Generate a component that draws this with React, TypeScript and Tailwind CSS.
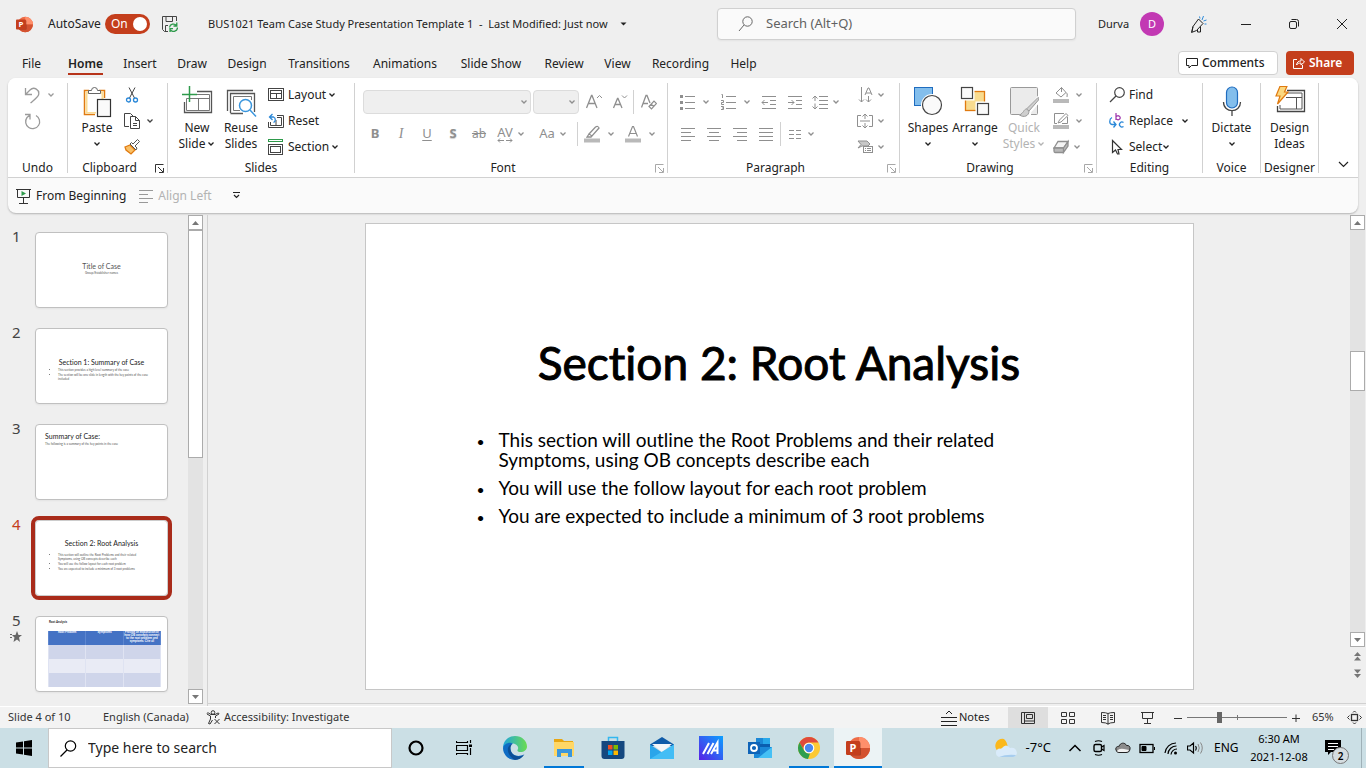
import React from 'react';

/* ---------- Shared pieces ---------- */

type SvgProps = { w?: number; h?: number; className?: string; children: React.ReactNode };

const Svg = ({ w = 16, h = 16, className = '', children }: SvgProps) => (
  <svg width={w} height={h} viewBox={`0 0 ${w} ${h}`} fill="none" stroke="currentColor" aria-hidden="true" className={`shrink-0 ${className}`}>
    {children}
  </svg>
);

const Chevron = ({ className = '' }: { className?: string }) => (
  <Svg w={8} h={6} className={className}>
    <path d="M1.5 1.5L4 4L6.5 1.5" strokeWidth="1.3" />
  </Svg>
);

const Launcher = ({ muted = false }: { muted?: boolean }) => (
  <button aria-label="Open dialog" className={`flex w-4 items-center justify-center ${muted ? 'text-[#a8a8a8]' : 'text-[#333]'}`}>
    <Svg w={9} h={9}>
      <path d="M8.5 .5H.5V8.5M3 3L8 8M8.5 4V8.5H4" />
    </Svg>
  </button>
);

const Lines = ({ rows }: { rows: [number, number][] }) => (
  <Svg>
    {rows.map(([x, end], i) => (
      <path key={i} d={`M${x} ${i * 4 + 2.5}H${end}`} />
    ))}
  </Svg>
);

type GroupProps = { label: string; width: string; launcher?: 'dark' | 'muted'; children: React.ReactNode };

const Group = ({ label, width, launcher, children }: GroupProps) => (
  <>
    <section aria-label={label} className={`flex shrink-0 flex-col pt-1 ${width}`}>
      <div className="flex h-[78px]">{children}</div>
      <div className="flex h-4">
        <span className="flex-1 text-center leading-4">{label}</span>
        {launcher && <Launcher muted={launcher === 'muted'} />}
      </div>
    </section>
    <div className="mt-[5px] h-[90px] w-px shrink-0 bg-[#d1d1d1]" />
  </>
);

type BigButtonProps = { icon: React.ReactNode; lines: string[]; arrow?: boolean; width: string; muted?: boolean };

const BigButton = ({ icon, lines, arrow, width, muted }: BigButtonProps) => (
  <button className={`flex shrink-0 flex-col items-center pt-0.5 ${width} ${muted ? 'text-[#b3b3b3]' : ''}`}>
    <span className="flex h-9 items-center justify-center">{icon}</span>
    {lines.map((line, i) => (
      <span key={line} className="flex h-4 items-center gap-0.5 leading-4">
        {line}
        {arrow && lines.length > 1 && i === lines.length - 1 && <Chevron />}
      </span>
    ))}
    {arrow && lines.length === 1 && (
      <span className="flex h-4 items-center">
        <Chevron />
      </span>
    )}
  </button>
);

const SmallButton = ({ icon, label, arrow, gap = 'ml-0.5' }: { icon: React.ReactNode; label?: string; arrow?: boolean; gap?: string }) => (
  <button className="flex h-[26px] items-center">
    {icon}
    {label && <span className="ml-1">{label}</span>}
    {arrow && <Chevron className={gap} />}
  </button>
);

const RowSeparator = ({ className = '' }: { className?: string }) => <div className={`h-6 w-px shrink-0 bg-[#d1d1d1] ${className}`} />;

const PowerPointLogo = ({ size }: { size: number }) => (
  <svg width={size} height={size} viewBox="0 0 24 24" aria-hidden="true" className="shrink-0">
    <circle cx="13" cy="12" r="11" fill="#ed6c47" />
    <path d="M13 1a11 11 0 0 1 11 11H13z" fill="#ff8f6b" />
    <path d="M2 12h22a11 11 0 0 1-22 0z" fill="#d35230" />
    <path d="M3 6h10.500a1.500 1.500 0 0 1 1.500 1.500v11a1 1 0 0 1-1 1H4z" fill="#000" opacity=".2" />
    <rect y="5" width="14" height="14" rx="1.200" fill="#c43e1c" />
    <text x="7" y="16" textAnchor="middle" fontFamily="Open Sans, sans-serif" fontWeight="700" fontSize="11" fill="#fff">P</text>
  </svg>
);

/* ---------- Title bar and tabs ---------- */

const TitleBar = () => (
  <header className="flex h-12 shrink-0 items-center">
    <div className="flex flex-1 items-center pl-4">
      <PowerPointLogo size={17} />
      <label htmlFor="autosave" className="ml-[15px] w-[57px]">AutoSave</label>
      <span className="relative flex h-5 w-[45px] items-center">
        <input id="autosave" type="checkbox" defaultChecked className="h-5 w-[45px] appearance-none rounded-full bg-[#c43e1c]" />
        <span className="pointer-events-none absolute left-1.5 text-white">On</span>
        <span className="pointer-events-none absolute right-[3px] size-3.5 rounded-full bg-white" />
      </span>
      <button aria-label="Save" className="ml-3 text-[#444]">
        <Svg>
          <path d="M6 15.500H2.500L.5 13.500V.5H14.500V5M4 .5V5.500H10.500V.5M3.500 15.500V9.500H6" />
          <path d="M7.500 11.500A4 4 0 0 1 14.500 9.500M14.800 6.500V10H11.500M15.500 11.500A4 4 0 0 1 8.500 14M8 16V12.700H11" stroke="#2e9a4b" strokeWidth="1.300" />
        </Svg>
      </button>
      <button className="ml-[30px] flex items-center whitespace-pre text-[11px]">
        BUS1021 Team Case Study Presentation Template 1  -  Last Modified: Just now
        <Svg w={7} h={5} className="ml-3">
          <path d="M.5 .5H6.500L3.500 3.500z" fill="currentColor" stroke="none" />
        </Svg>
      </button>
    </div>
    <div className="flex h-8 w-[359px] items-center rounded border border-[#d0d0d0] bg-[#fafafa] pl-5 text-[#666] shadow-xs">
      <Svg>
        <circle cx="9.500" cy="5.500" r="4.700" />
        <path d="M6 9L1 15" />
      </Svg>
      <input aria-label="Search" placeholder="Search (Alt+Q)" className="ml-3 flex-1 bg-transparent text-[13px] outline-none placeholder:text-[#616161]" />
    </div>
    <div className="flex w-[290px] items-center text-[#222]">
      <span className="ml-[22px] w-[42px] text-[11px]">Durva</span>
      <span className="flex size-6 items-center justify-center rounded-full bg-[#c239b3] text-[11px] text-white">D</span>
      <button aria-label="Drawing tools" className="ml-[26px]">
        <Svg w={17} h={17}>
          <path d="M8.500 3L13 7.500L6.500 14.500L1.500 16.500L3 10.500zM7.500 13.500V16H10.500V10.500M3 10.500L2 16" />
          <path d="M9.500 .5L10 2.500M13.500 0L12 4M16.500 4L13.500 5M16.500 8H14.500" stroke="#2b88d8" />
        </Svg>
      </button>
      <button aria-label="Minimize" className="ml-[33px]">
        <Svg w={12} h={12}><path d="M1 6.500H11" /></Svg>
      </button>
      <button aria-label="Restore" className="ml-9">
        <Svg w={12} h={12}>
          <rect x="1.500" y="3.500" width="7" height="7" rx="1.500" />
          <path d="M3.500 1.500H8.500A2 2 0 0 1 10.500 3.500V8.500" />
        </Svg>
      </button>
      <button aria-label="Close" className="ml-9">
        <Svg w={12} h={12}><path d="M1 1L11 11M11 1L1 11" /></Svg>
      </button>
    </div>
  </header>
);

const tabs = [
  { name: 'File', width: 'w-[39px]' },
  { name: 'Home', width: 'w-[69px]' },
  { name: 'Insert', width: 'w-10' },
  { name: 'Draw', width: 'w-16' },
  { name: 'Design', width: 'w-[46px]' },
  { name: 'Transitions', width: 'w-[98px]' },
  { name: 'Animations', width: 'w-[74px]' },
  { name: 'Slide Show', width: 'w-[98px]' },
  { name: 'Review', width: 'w-12' },
  { name: 'View', width: 'w-[59px]' },
  { name: 'Recording', width: 'w-[67px]' },
  { name: 'Help', width: 'w-[59px]' },
];

const TabRow = () => (
  <nav className="flex h-[30px] shrink-0 items-center pl-3 pr-3">
    {tabs.map((tab) => (
      <button key={tab.name} className={`flex h-[30px] shrink-0 justify-center leading-8 ${tab.width}`}>
        {tab.name === 'Home' ? <span className="h-[27px] border-b-2 border-[#b7341a] font-semibold">Home</span> : tab.name}
      </button>
    ))}
    <div className="flex-1" />
    <button className="flex h-6 w-[100px] items-center gap-1 rounded border border-[#d1d1d1] bg-white pl-[7px] font-medium">
      <Svg w={12} h={12}>
        <path d="M.5 1.500H11.500V8.500H5.500L3 11V8.500H.5z" />
      </Svg>
      Comments
    </button>
    <button className="ml-2 flex h-6 w-[68px] items-center gap-1 rounded bg-[#c43e1c] pl-[7px] font-semibold text-white">
      <Svg w={12} h={12}>
        <path d="M4 2.500H.5V11.500H9.500V8M3.500 8C4 5 5.500 4 8 4V1.500L11.500 5L8 8V6C6 6 4.500 6.500 3.500 8z" />
      </Svg>
      Share
    </button>
  </nav>
);

/* ---------- Ribbon ---------- */

const UndoGroup = () => (
  <Group label="Undo" width="w-[59px]">
    <div className="flex flex-col pl-4 text-[#9b9b9b]">
      <SmallButton
        arrow
        gap="ml-1.5"
        icon={<Svg w={17} h={17}><path d="M1.500 1V7.500H8M1.500 7.500L6 3C10 -1 16 3 14.500 8C14 10 10 13 6.500 16" strokeWidth="1.300" /></Svg>}
      />
      <SmallButton icon={<Svg w={17} h={17}><path d="M1 1.500H6V6.500M6 2L3 4.500A7 7 0 1 0 12 2.500" strokeWidth="1.300" /></Svg>} />
    </div>
  </Group>
);

const ClipboardGroup = () => (
  <Group label="Clipboard" width="w-[99px]" launcher="dark">
    <BigButton
      width="ml-1 w-[50px]"
      lines={['Paste']}
      arrow
      icon={
        <Svg w={30} h={32} className="text-[#333]">
          <path d="M13 28.500H2.500V4.500H7M17 4.500H22.500V12" stroke="#e07a10" strokeWidth="1.500" />
          <path d="M3.500 5.500H21.500V13H14V27.500H3.500z" fill="#fbdc94" stroke="none" />
          <path d="M5.500 7.500H19.500V24H14V26H5.500z" fill="#fff" stroke="none" />
          <path d="M6.500 7.500V4.500H9.500A3 3 0 0 1 15.500 4.500H18.500V7.500z" fill="#fff" stroke="#666" />
          <rect x="15.500" y="13.500" width="13" height="17" fill="#fafafa" strokeWidth="1.200" />
        </Svg>
      }
    />
    <div className="ml-0.5 flex flex-col text-[#444]">
      <SmallButton
        icon={
          <Svg>
            <path d="M5 .5L10.500 11M11 .5L5.500 11" />
            <circle cx="4.500" cy="13" r="2" stroke="#2b88d8" strokeWidth="1.300" />
            <circle cx="11.500" cy="13" r="2" stroke="#2b88d8" strokeWidth="1.300" />
          </Svg>
        }
      />
      <SmallButton
        arrow
        gap="ml-1.5"
        icon={
          <Svg>
            <path d="M5 13.500H.5V.5H6.500L9 3M6.500 3.500H11.500L15.500 7.500V15.500H6.500zM11.500 3.500V7.500H15.500M9 10.500H13M9 12.500H13" />
          </Svg>
        }
      />
      <SmallButton
        icon={
          <Svg>
            <path d="M1 8L6 6L11 11L7 15L2 11z" fill="#f9c067" stroke="#e07a10" strokeWidth="1.300" />
            <path d="M6 5L12 11L13 9L11 7L15.500 2.500L13.500 .5L9 5L7.500 3.500z" fill="#fff" stroke="#555" />
          </Svg>
        }
      />
    </div>
  </Group>
);

const SlidesGroup = () => (
  <Group label="Slides" width="w-[186px]">
    <BigButton
      width="ml-[7px] w-11"
      lines={['New', 'Slide']}
      arrow
      icon={
        <Svg w={32} h={32} className="text-[#555]">
          <path d="M16 5.500H30.500V26.500H3.500V16" strokeWidth="1.300" />
          <path d="M16 8.500H28.500V24.500H5.500V12.500H28.500M17.500 12.500V24.500" stroke="#777" />
          <path d="M8.500 0V16M1 8.500H16" stroke="#2e9a4b" strokeWidth="1.500" />
        </Svg>
      }
    />
    <BigButton
      width="w-11"
      lines={['Reuse', 'Slides']}
      icon={
        <Svg w={32} h={32} className="text-[#555]">
          <path d="M2.500 25V4.500H28M5.500 27V7.500H29.500V26M5.500 27.500H18" strokeWidth="1.300" />
          <path d="M8.500 24.500V10.500H26.500V14M8.500 24.500H15" stroke="#777" />
          <circle cx="20.500" cy="19.500" r="6" fill="#fff" stroke="#3a96dd" strokeWidth="1.500" />
          <path d="M25 24L31 30.500" stroke="#3a96dd" strokeWidth="1.500" />
        </Svg>
      }
    />
    <div className="ml-[5px] flex flex-col">
      <SmallButton
        label="Layout"
        arrow
        icon={
          <Svg className="text-[#444]">
            <rect x=".5" y="1.500" width="15" height="12" />
            <rect x="2.500" y="3.500" width="11" height="8" />
            <path d="M2.500 6.500H13.500M8.500 6.500V11.500" />
          </Svg>
        }
      />
      <SmallButton
        label="Reset"
        icon={
          <Svg className="text-[#444]">
            <path d="M9 2.500H15.500V14.500H.5V9M2.500 9V12.500H13.500V4.500H9M8 7V12" />
            <path d="M4.500 1L1.500 4L4.500 7M1.500 4H5.500A3 3 0 0 1 5.500 9.500" stroke="#2b88d8" strokeWidth="1.300" />
          </Svg>
        }
      />
      <SmallButton
        label="Section"
        arrow
        icon={
          <Svg className="text-[#444]">
            <rect x=".5" y=".5" width="14" height="2" stroke="#2e9a4b" />
            <rect x=".5" y="5.500" width="14" height="10" />
            <rect x="2.500" y="7.500" width="10" height="6" />
          </Svg>
        }
      />
    </div>
  </Group>
);

const cell = 'flex h-6 shrink-0 items-center justify-center';

const FontGroup = () => (
  <Group label="Font" width="w-[312px]" launcher="muted">
    <div className="flex flex-col gap-2 pt-2 pl-2 text-[#8f8f8f]">
      <div className="flex h-6 items-center">
        <button aria-label="Font family" className="flex h-6 w-[168px] items-center justify-end rounded border border-[#dcdcdc] bg-[#efefef] pr-0.5"><Chevron /></button>
        <button aria-label="Font size" className="ml-0.5 flex h-6 w-[46px] items-center justify-end rounded border border-[#dcdcdc] bg-[#efefef] pr-0.5"><Chevron /></button>
        <button aria-label="Increase font size" className={`${cell} ml-0.5 w-[26px]`}>
          <Svg><path d="M.5 14L5.500 1.500H6L11 14M2.500 9.500H9" strokeWidth="1.300" /><path d="M11 4L13.500 1.500L16 4" /></Svg>
        </button>
        <button aria-label="Decrease font size" className={`${cell} w-[26px]`}>
          <Svg><path d="M1.500 14L5.500 4.500H6L10 14M3 10.500H8.500" strokeWidth="1.300" /><path d="M10 1.500L12.500 4L15 1.500" /></Svg>
        </button>
        <RowSeparator />
        <button aria-label="Clear formatting" className={`${cell} ml-0.5 w-[26px]`}>
          <Svg><path d="M.5 13.500L5 1.500H6L9 9M2 9.500H7" strokeWidth="1.300" /><path d="M8 12.500L13 7L15.500 9.500L10.500 15zM10 10L12.800 12.500" strokeWidth="1.200" /></Svg>
        </button>
      </div>
      <div className="-ml-px flex h-6 items-center">
        <button className={`${cell} w-[26px] text-[13px] font-bold`}>B</button>
        <button className={`${cell} w-[26px] font-['Liberation_Serif',serif] text-sm italic`}>I</button>
        <button className={`${cell} w-[26px] text-[13px] underline underline-offset-2`}>U</button>
        <button className={`${cell} w-[26px] text-[13px] font-bold text-shadow-xs`}>S</button>
        <button className={`${cell} w-[26px] line-through`}>ab</button>
        <button aria-label="Character spacing" className={`${cell} ml-px w-9 gap-1`}>
          <span className="flex flex-col items-center">
            <span className="text-[13px] leading-3">AV</span>
            <Svg w={16} h={5}><path d="M7 2.500H1M3 .5L1 2.500L3 4.500M9 2.500H15M13 .5L15 2.500L13 4.500" /></Svg>
          </span>
          <Chevron />
        </button>
        <button aria-label="Change case" className={`${cell} ml-1.5 w-9 gap-1 text-[13px]`}>Aa<Chevron /></button>
        <RowSeparator className="ml-1.5" />
        <button aria-label="Highlight color" className={`${cell} ml-1.5 gap-[7px]`}>
          <Svg w={16} h={18}>
            <path d="M5 9L11.500 2Q14 .5 15 3L8 11zM5 9L3 12H7L8 11" strokeWidth="1.300" />
            <path d="M0 15.500H16" stroke="#b9b9b9" strokeWidth="4" />
          </Svg>
          <Chevron />
        </button>
        <button aria-label="Font color" className={`${cell} ml-2.5 gap-[7px]`}>
          <Svg w={16} h={18}>
            <path d="M3.500 11.500L7.500 1.500H8.500L12.500 11.500M5 8.500H11" strokeWidth="1.200" />
            <path d="M0 15.500H16" stroke="#b9b9b9" strokeWidth="4" />
          </Svg>
          <Chevron />
        </button>
      </div>
    </div>
  </Group>
);

const ParagraphGroup = () => (
  <Group label="Paragraph" width="w-[231px]" launcher="muted">
    <div className="flex w-[185px] flex-col gap-2 pt-2 pl-3 text-[#8f8f8f]">
      <div className="flex h-6 items-center">
        <button aria-label="Bullets" className="flex items-center gap-1.5">
          <Svg>
            <path d="M5 2.500H15M5 8.500H15M5 14.500H15" />
            <path d="M0 2.500H3M0 8.500H3M0 14.500H3" strokeWidth="3" />
          </Svg>
          <Chevron />
        </button>
        <button aria-label="Numbering" className="ml-[11px] flex items-center gap-1.5">
          <Svg>
            <path d="M5 2.500H15M5 8.500H15M5 14.500H15M.5 .5H1.500V4M0 6.500H2.500V8.500H.5V10.500H3M0 12.500H2.500V15.500H0M1 14H2" />
          </Svg>
          <Chevron />
        </button>
        <button aria-label="Decrease indent" className="ml-2.5">
          <Svg><path d="M1 2.500H15M9 6.500H15M9 10.500H15M1 14.500H15M7 8.500H1M3.500 6L1 8.500L3.500 11" /></Svg>
        </button>
        <button aria-label="Increase indent" className="ml-2.5">
          <Svg><path d="M1 2.500H15M9 6.500H15M9 10.500H15M1 14.500H15M1 8.500H7M4.500 6L7 8.500L4.500 11" /></Svg>
        </button>
        <button aria-label="Line spacing" className="ml-[9px] flex items-center gap-1">
          <Svg><path d="M7 2.500H16M7 6.500H16M7 10.500H16M7 14.500H16M3 2V7M.5 4.500L3 2L5.500 4.500M3 9.500V15M.5 12.500L3 15L5.500 12.500" /></Svg>
          <Chevron />
        </button>
      </div>
      <div className="flex h-6 items-center gap-2.5">
        <button aria-label="Align left"><Lines rows={[[1, 15], [1, 11], [1, 15], [1, 11]]} /></button>
        <button aria-label="Center"><Lines rows={[[1, 15], [3, 13], [1, 15], [3, 13]]} /></button>
        <button aria-label="Align right"><Lines rows={[[1, 15], [5, 15], [1, 15], [5, 15]]} /></button>
        <button aria-label="Justify"><Lines rows={[[1, 15], [1, 15], [1, 15], [1, 15]]} /></button>
        <RowSeparator className="-mx-1" />
        <button aria-label="Columns" className="flex items-center gap-0.5 pl-0.5">
          <Svg><path d="M0 4.500H5M7 4.500H12M0 8.500H5M7 8.500H12M0 12.500H5M7 12.500H12" /></Svg>
          <Chevron />
        </button>
      </div>
    </div>
    <div className="flex flex-col pl-1 text-[#8f8f8f]">
      <SmallButton
        arrow
        gap="ml-1"
        icon={<Svg><path d="M4.500 0V15M2 12.500L4.500 15L7 12.500M8 8L11 1H12L15 8M9 6H14M11.500 9V15M9 12.500L11.500 15L14 12.500" /></Svg>}
      />
      <SmallButton
        arrow
        gap="ml-1"
        icon={<Svg><path d="M4 2.500H.5V13.500H4M12 2.500H15.500V13.500H12M3 8H13M8 1V6M5.500 3.500L8 1L10.500 3.500M8 10V15M5.500 12.500L8 15L10.500 12.500" /></Svg>}
      />
      <SmallButton
        arrow
        gap="ml-1"
        icon={
          <Svg>
            <path d="M1 2H10L13 5L11 7H5L1 9L4 5.500z" fill="#c8c8c8" />
            <rect x="6.500" y="7.500" width="9" height="6" fill="#fff" />
            <path d="M8 9.500H9M10 9.500H14M8 11.500H9M10 11.500H14" />
          </Svg>
        }
      />
    </div>
  </Group>
);

const DrawingGroup = () => (
  <Group label="Drawing" width="w-[196px]" launcher="muted">
    <BigButton
      width="ml-1 w-12"
      lines={['Shapes']}
      arrow
      icon={
        <Svg w={30} h={32}>
          <rect x="1.500" y="1.500" width="18" height="18" fill="#83beec" stroke="#1f6cbf" />
          <circle cx="19" cy="19" r="9.500" fill="#fafafa" stroke="#fff" strokeWidth="3" />
          <circle cx="19" cy="19" r="9.500" fill="#fafafa" stroke="#444" strokeWidth="1.200" />
        </Svg>
      }
    />
    <BigButton
      width="w-[46px]"
      lines={['Arrange']}
      arrow
      icon={
        <Svg w={30} h={32}>
          <rect x="5.500" y="5.500" width="19" height="19" fill="#f8db8f" stroke="#e07a10" strokeWidth="1.300" />
          <path d="M0 0H14.500V14.500H0zM15.500 15.500H30V30H15.500z" fill="#fff" stroke="none" />
          <rect x="1.500" y="1.500" width="11" height="11" fill="#fafafa" stroke="#444" strokeWidth="1.200" />
          <rect x="17.500" y="17.500" width="11" height="11" fill="#fafafa" stroke="#444" strokeWidth="1.200" />
        </Svg>
      }
    />
    <BigButton
      width="ml-0.5 w-12"
      lines={['Quick', 'Styles']}
      arrow
      muted
      icon={
        <Svg w={30} h={32} className="text-[#999]">
          <rect x="1.500" y="1.500" width="27" height="27" rx="1" fill="#ebebeb" />
          <path d="M29 12L19 24C17 23 15 25 14 28L10 31H18C21 30 21 28 20.500 26L30 15z" fill="#dadada" stroke="#fff" strokeWidth="3" />
          <path d="M29 11.500Q31 12 29.500 14L20 25L17.500 23zM17.500 23C14.500 23 15 27 10.500 29C15 32 20 30 20 25" fill="#cfcfcf" />
        </Svg>
      }
    />
    <div className="ml-[5px] flex flex-col text-[#8f8f8f]">
      <SmallButton
        arrow
        gap="ml-1.5"
        icon={
          <Svg w={16} h={18}>
            <path d="M3 7L8.500 1.500L13 6.500L8 11zM8.500 1.500V6M13 6.500Q15 7 14 11" />
            <path d="M0 15H16" stroke="#b9b9b9" strokeWidth="4" />
          </Svg>
        }
      />
      <SmallButton
        arrow
        gap="ml-1.5"
        icon={
          <Svg w={16} h={18}>
            <path d="M11 1.500H1.500V11.500H4M14.500 5V11.500H9M5 11L6.500 8L13 1.500L15 3.500L8 10z" />
            <path d="M0 15H16" stroke="#b9b9b9" strokeWidth="4" />
          </Svg>
        }
      />
      <SmallButton
        arrow
        gap="ml-1"
        icon={
          <Svg>
            <path d="M1 9L5 2.500H15L10.500 9z" fill="#f4f4f4" strokeWidth="1.300" />
            <path d="M1 9H10.500V13.500H2Q1 13.500 1 12zM10.500 9L15 2.500V7L10.500 13.500z" fill="#b9b9b9" strokeWidth="1.300" />
          </Svg>
        }
      />
    </div>
  </Group>
);

const EditingGroup = () => (
  <Group label="Editing" width="w-[105px]">
    <div className="flex flex-col pl-3">
      <SmallButton
        label="Find"
        icon={<Svg className="text-[#444]"><circle cx="10.500" cy="5.500" r="4.800" strokeWidth="1.200" /><path d="M7 9L1 15" strokeWidth="1.200" /></Svg>}
      />
      <SmallButton
        label="Replace"
        arrow
        gap="ml-2"
        icon={
          <Svg>
            <path d="M7 0V7M7 4A2.200 2 0 1 1 7 5.500" stroke="#a33fb0" strokeWidth="1.300" />
            <path d="M14.500 9.500A2.500 2.500 0 1 0 14.500 13.500" stroke="#2b88d8" strokeWidth="1.300" />
            <path d="M3 4.500C0 6 0 11 3 11.500H7M4.500 8.500L7 11.500L4.500 14.500" stroke="#2b88d8" strokeWidth="1.300" />
          </Svg>
        }
      />
      <SmallButton
        label="Select"
        arrow
        gap="ml-0"
        icon={<Svg className="text-[#333]"><path d="M3.500 1.500V13.500L6.500 11L8.500 15H10L9 10.500H12.500z" strokeWidth="1.200" /></Svg>}
      />
    </div>
  </Group>
);

const Ribbon = () => (
  <div className="mx-2 mb-0.5 flex shrink-0 flex-col rounded-lg bg-[#fafafa] shadow-[0_1px_2px_rgba(0,0,0,0.25)]">
    <div className="flex h-[100px] overflow-hidden rounded-t-lg border-b border-[#d1d1d1] bg-white">
      <UndoGroup />
      <ClipboardGroup />
      <SlidesGroup />
      <FontGroup />
      <ParagraphGroup />
      <DrawingGroup />
      <EditingGroup />
      <Group label="Voice" width="w-[57px]">
        <BigButton
          width="w-[57px]"
          lines={['Dictate']}
          arrow
          icon={
            <Svg w={20} h={32} className="text-[#444]">
              <rect x="4.500" y="1" width="11" height="21" rx="5.500" fill="#83beec" stroke="#1f6cbf" strokeWidth="1.200" />
              <path d="M1.500 16C1.500 27.500 18.500 27.500 18.500 16M10 25V30" strokeWidth="1.300" />
            </Svg>
          }
        />
      </Group>
      <Group label="Designer" width="w-[57px]">
        <BigButton
          width="w-[57px]"
          lines={['Design', 'Ideas']}
          icon={
            <Svg w={32} h={32} className="text-[#444]">
              <path d="M13 4.500H30.500V25.500H3.500V20" strokeWidth="1.300" />
              <path d="M13 7H28V23H6V19M12 11.500H28M22.500 11.500V23" stroke="#555" />
              <path d="M6 .3H13L10.500 6H14L3.500 18L6 10H2z" fill="#fbd87f" stroke="#e07a10" strokeWidth="1.200" />
            </Svg>
          }
        />
      </Group>
      <div className="flex flex-1 items-end justify-end pr-[9px] pb-[9px]">
        <button aria-label="Collapse ribbon">
          <Svg w={11} h={7}><path d="M1 1L5.500 5.500L10 1" strokeWidth="1.200" /></Svg>
        </button>
      </div>
    </div>
    <div className="flex h-[35px] items-center pl-2">
      <button className="flex items-center gap-1">
        <Svg className="text-[#333]">
          <path d="M0 1.500H15M1.500 1.500V9.500H13.500V1.500M7.500 9.500V15.500M3 15.500H12" />
          <path d="M5.500 3L10 5.500L5.500 8z" fill="#2e9a4b" stroke="none" />
        </Svg>
        From Beginning
      </button>
      <button className="ml-3 flex items-center gap-1 text-[#b3b3b3]">
        <Svg><path d="M1 2.500H15M1 6.500H10M1 10.500H15M1 14.500H10" stroke="#999" /></Svg>
        Align Left
      </button>
      <button aria-label="Customize toolbar" className="ml-5">
        <Svg w={9} h={7}><path d="M1 .5H8M2 3L4.500 5.500L7 3" strokeWidth="1.200" /></Svg>
      </button>
    </div>
  </div>
);

/* ---------- Slides ---------- */

const ScrollArrow = ({ down = false }: { down?: boolean }) => (
  <button aria-label={down ? 'Scroll down' : 'Scroll up'} className="flex h-[15px] w-[15px] shrink-0 items-center justify-center border border-[#ababab] bg-white text-[#777]">
    <Svg w={7} h={4}>
      <path d={down ? 'M0 0H7L3.500 4z' : 'M0 4H7L3.500 0z'} fill="currentColor" stroke="none" />
    </Svg>
  </button>
);

const slideBullets = [
  'This section will outline the Root Problems and their related Symptoms, using OB concepts describe each',
  'You will use the follow layout for each root problem',
  'You are expected to include a minimum of 3 root problems',
];

const Bullets = ({ items }: { items: string[] }) => (
  <ul className="flex list-disc flex-col gap-px pl-[22px] pr-4 text-[3px] leading-[4px] text-[#555]">
    {items.map((item) => <li key={item}>{item}</li>)}
  </ul>
);

const thumbnails = [
  <div className="pt-[28px] text-center">
    <p className="text-[7px] leading-[10px] text-[#555]">Title of Case</p>
    <p className="text-[3px] leading-[5px] text-[#555]">Group/Establisher names</p>
  </div>,
  <div className="pt-[29px]">
    <p className="mb-px text-center text-[7px] leading-[9px]">Section 1: Summary of Case</p>
    <Bullets items={['This section provides a high level summary of the case', 'The section will be one slide in length with the key points of the case included']} />
  </div>,
  <div className="pt-[7px] pl-[9px]">
    <p className="text-[7px] leading-[9px]">Summary of Case:</p>
    <p className="text-[3px] leading-[7px] text-[#555]">The following is a summary of the key points in the case</p>
  </div>,
  <div className="pt-[18px]">
    <p className="mb-[5px] text-center text-[7px] leading-[9px]">Section 2: Root Analysis</p>
    <Bullets items={slideBullets} />
  </div>,
  <div className="pt-px pl-3">
    <p className="pb-[5px] pl-px text-[3px] leading-[8px] font-bold">Root Analysis</p>
    <table className="w-[113px] table-fixed border-collapse text-center text-[3px] leading-[3px] text-white">
      <thead>
        <tr className="h-[14px] bg-[#4472c4] align-top">
          <th className="border-x border-[#5d86cf]">Root Problem</th>
          <th className="border-x border-[#5d86cf]">Symptoms</th>
          <th className="border-x border-[#5d86cf]">Provide an explanation of how OB concepts connect to the root problem and symptoms. Cite all</th>
        </tr>
      </thead>
      <tbody>
        {['bg-[#cfd5ea]', 'bg-[#e9ebf5]', 'bg-[#cfd5ea]'].map((shade, i) => (
          <tr key={i} className={`h-[14px] ${shade}`}><td className="border-x border-[#dfe3f2]" /><td /><td className="border-x border-[#dfe3f2]" /></tr>
        ))}
      </tbody>
    </table>
  </div>,
];

const SlidePanel = () => (
  <aside className="flex w-[208px] shrink-0 border-r border-[#d1d1d1]">
    <ol className="flex w-[188px] flex-col gap-5 overflow-hidden pt-[17px]">
      {thumbnails.map((content, i) => (
        <li key={i} className="flex h-[76px] shrink-0">
          <div className={`flex w-[35px] flex-col pl-3 text-[15px] leading-2 ${i === 3 ? 'text-[#c43e1c]' : 'text-[#444]'}`}>
            {i + 1}
            {i === 4 && (
              <Svg w={12} h={11} className="mt-[7px] -ml-0.5">
                <path d="M7 0L8.500 4H12L9 6.500L10 11L7 8.500L3.500 11L4.500 6.500L2 4H5.500z" fill="#666" stroke="none" />
                <path d="M0 3.500H2M0 6.500H2" stroke="#666" />
              </Svg>
            )}
          </div>
          <button
            aria-label={`Slide ${i + 1}`}
            className={`flex h-[76px] w-[133px] flex-col overflow-hidden rounded-[4px] border bg-white text-left font-['Lato',sans-serif] text-[#222] [font-variant-ligatures:none] ${i === 3 ? 'border-[#ccc] outline-4 outline-[#a92b1a]' : 'border-[#c0c0c0] shadow-xs'}`}
          >
            <div className="w-full">{content}</div>
          </button>
        </li>
      ))}
    </ol>
    <div className="mb-0.5 flex w-[15px] flex-col bg-[#e3e3e3]">
      <ScrollArrow />
      <div className="h-[228px] border border-[#ababab] bg-white" />
      <div className="flex-1" />
      <ScrollArrow down />
    </div>
  </aside>
);

const SlideEditor = () => (
  <main className="mb-0.5 flex min-w-0 flex-1">
    <div className="flex min-w-0 flex-1 justify-center border-b border-[#d1d1d1] pt-2">
      <article className="flex h-[467px] w-[829px] flex-col border border-[#c6c6c6] bg-white px-[110px] font-['Lato',sans-serif] text-black [font-variant-ligatures:none]">
        <h1 className="mt-[111px] text-center text-[46px] leading-[56px] [-webkit-text-stroke:1px]">Section 2: Root Analysis</h1>
        <ul className="mt-[39px] flex flex-col gap-2 pl-[23px] text-[19px] leading-5">
          {slideBullets.map((item) => (
            <li key={item} className="max-w-[520px] before:-ml-6 before:inline-block before:w-6 before:pl-0.5 before:text-sm before:leading-4 before:content-['•']">{item}</li>
          ))}
        </ul>
      </article>
    </div>
    <div className="flex w-4 flex-col border-b border-[#d1d1d1] pr-px">
      <div className="flex flex-1 flex-col bg-[#e3e3e3]">
        <ScrollArrow />
        <div className="mt-[121px] h-10 border border-[#ababab] bg-white" />
        <div className="flex-1" />
        <ScrollArrow down />
      </div>
      <div className="flex h-14 flex-col items-center gap-2 pt-[5px] text-[#777]">
        <button aria-label="Previous slide">
          <Svg w={7} h={9} className="block"><path d="M0 4H7L3.500 0zM0 8.500H7L3.500 4.500z" fill="currentColor" stroke="none" /></Svg>
        </button>
        <button aria-label="Next slide">
          <Svg w={7} h={9} className="block"><path d="M0 .5H7L3.500 4.500zM0 5H7L3.500 9z" fill="currentColor" stroke="none" /></Svg>
        </button>
      </div>
    </div>
  </main>
);

/* ---------- Status bar ---------- */

const StatusBar = () => (
  <footer className="flex h-[22px] shrink-0 items-center border-t border-white bg-[#f3f3f3] pl-2 text-[11px] text-[#333]">
    <span className="w-[95px]">Slide 4 of 10</span>
    <button className="w-[103px] text-left">English (Canada)</button>
    <button className="flex items-center gap-[3px]">
      <Svg w={15} h={15}>
        <circle cx="7" cy="2.500" r="1.800" />
        <path d="M1 3.500Q1 2.500 2.500 3L5 4.500H9L12 3Q13 3 13 4L9.500 6V8M4.500 6V9L2.500 13.500L4 14L6.500 10M4.500 6L1 4M8.500 9L13.500 14M13.500 9L8.500 14" />
      </Svg>
      Accessibility: Investigate
    </button>
    <div className="flex-1" />
    <button className="flex w-[67px] items-center gap-px text-[#222]">
      <Svg w={17} h={16}><path d="M0 7.500H16M0 11.500H16M0 15.500H16M5 4L8 1L11 4" /></Svg>
      Notes
    </button>
    <button aria-label="Normal view" className="flex h-[21px] w-10 items-center justify-center bg-[#dedede]">
      <Svg><path d="M1.500 2.500H14.500V13.500H1.500zM4.500 2.500V13.500M6.500 4.500H12.500V8.500H6.500zM4.500 11H14.500" /></Svg>
    </button>
    <button aria-label="Slide sorter" className="flex w-10 justify-center">
      <Svg><path d="M1.500 2.500H6.500V6.500H1.500zM9.500 2.500H14.500V6.500H9.500zM1.500 9.500H6.500V13.500H1.500zM9.500 9.500H14.500V13.500H9.500z" /></Svg>
    </button>
    <button aria-label="Reading view" className="flex w-10 justify-center">
      <Svg><path d="M8 3.500V14.500M8 3.500Q6 2.500 1.500 2.500V12.500Q6 12.500 8 14Q10 12.500 14.500 12.500V2.500Q10 2.500 8 3.500M3 5.500H6M3 7.500H6M3 9.500H6M10 5.500H13M10 7.500H13M10 9.500H13" /></Svg>
    </button>
    <button aria-label="Slide show" className="flex w-10 justify-center">
      <Svg><path d="M1 2.500H14M2.500 2.500V8.500H12.500V2.500M7.500 8.500V13.500M4 13.500H11" /></Svg>
    </button>
    <button aria-label="Zoom out" className="ml-1.5"><Svg w={8} h={8}><path d="M0 4.500H8" /></Svg></button>
    <span className="relative mx-[5px] flex w-[100px] items-center">
      <input
        type="range"
        aria-label="Zoom"
        defaultValue={32}
        className="h-4 w-full appearance-none bg-transparent [&::-webkit-slider-runnable-track]:h-px [&::-webkit-slider-runnable-track]:bg-[#777] [&::-webkit-slider-thumb]:-mt-[5px] [&::-webkit-slider-thumb]:h-[11px] [&::-webkit-slider-thumb]:w-[5px] [&::-webkit-slider-thumb]:appearance-none [&::-webkit-slider-thumb]:bg-[#666]"
      />
      <span className="pointer-events-none absolute left-1/2 h-[5px] w-px bg-[#777]" />
    </span>
    <button aria-label="Zoom in"><Svg w={8} h={8}><path d="M0 4.500H8M4 .5V8" /></Svg></button>
    <button className="ml-3 w-[34px] text-left">65%</button>
    <button aria-label="Fit slide to window" className="mr-[3px]">
      <Svg w={17} h={15}>
        <rect x="5.500" y="4.500" width="6" height="6" strokeWidth="1.300" />
        <path d="M7 2.500L8.500 1L10 2.500M7 12.500L8.500 14L10 12.500M3.500 5.500L1.500 7.500L3.500 9.500M13.500 5.500L15.500 7.500L13.500 9.500" />
      </Svg>
    </button>
  </footer>
);

/* ---------- Windows taskbar ---------- */

const apps = [
  {
    name: 'Edge',
    icon: (
      <svg width="24" height="24" viewBox="0 0 24 24">
        <defs>
          <linearGradient id="edge-a" x1="0" y1="0" x2="1" y2="0"><stop offset="0" stopColor="#1fa5dc" /><stop offset="1" stopColor="#6bdc50" /></linearGradient>
        </defs>
        <path d="M0 12C0 5 5 0 12 0S24 5 24 10.500C24 14 21 16 17.500 16C14 16 14 14.500 15 13C16 9.500 12 7 8 7.500C4 8 1 10 0 12z" fill="url(#edge-a)" />
        <path d="M0 12C1 8 6 5.500 10 7.500C7 8.500 6.500 12 8 15.500C10 19.500 15 21.500 21 18.500C17 25 8 25.500 3 20C1 17.500 0 15 0 12z" fill="#0f6cc4" />
        <path d="M9.500 8C6 10.500 7 18 13 20C16 21 20 20 21.500 18C20 21 16 24 12 24C8 22 4 17 5 12C6 9 8 8 9.500 8z" fill="#0b4f96" />
      </svg>
    ),
  },
  {
    name: 'File Explorer',
    open: true,
    icon: (
      <svg width="24" height="24" viewBox="0 0 24 24">
        <path d="M2 3h8l2 2h9v4H2z" fill="#e8a612" />
        <path d="M2 6h20v14H2z" fill="#ffd766" />
        <path d="M5 13h15v8h-4v-4H9v4H5z" fill="#3a96dd" />
      </svg>
    ),
  },
  {
    name: 'Microsoft Store',
    icon: (
      <svg width="24" height="24" viewBox="0 0 24 24">
        <path d="M7.500 7V1.500h9V7" fill="none" stroke="#33b7f0" strokeWidth="1.500" />
        <path d="M.5 5h23v15a3 3 0 0 1-3 3h-17a3 3 0 0 1-3-3z" fill="#15487f" />
        <path d="M7 9h4.500v4.500H7z" fill="#f25022" />
        <path d="M12.500 9H17v4.500h-4.500z" fill="#7fba00" />
        <path d="M7 14.500h4.500V19H7z" fill="#00a4ef" />
        <path d="M12.500 14.500H17V19h-4.500z" fill="#ffb900" />
      </svg>
    ),
  },
  {
    name: 'Mail',
    icon: (
      <svg width="24" height="24" viewBox="0 0 24 24">
        <path d="M0 8.500L12 1l12 7.500V10H0z" fill="#0f5ba8" />
        <path d="M2 8h20l-10 8z" fill="#f3f6f9" />
        <path d="M0 8.500l12 8 12-8V23H0z" fill="#2aa5ea" />
        <path d="M0 23L24 8.500V23z" fill="#43bdf5" />
      </svg>
    ),
  },
  {
    name: 'MyASUS',
    icon: (
      <svg width="24" height="24" viewBox="0 0 24 24">
        <defs>
          <linearGradient id="asus-a" x1="0" y1="1" x2="1" y2="0"><stop offset="0" stopColor="#5a1fe6" /><stop offset="1" stopColor="#0aa0ff" /></linearGradient>
        </defs>
        <path d="M0 0h24v24H0z" fill="url(#asus-a)" />
        <path d="M4 18L10 7M8.500 18L14.500 7M12 18L18.500 6.500V18M14.500 14.500H18" fill="none" stroke="#fff" strokeWidth="2" />
      </svg>
    ),
  },
  {
    name: 'Outlook',
    icon: (
      <svg width="24" height="24" viewBox="0 0 24 24">
        <path d="M8 2h14v13H8z" fill="#0a5eb0" />
        <path d="M8 2h7v6H8z" fill="#1b87d6" />
        <path d="M15 2h7v6h-7z" fill="#28a8ea" />
        <path d="M6 11l18 0v11H6z" fill="#1a88d8" />
        <path d="M10 22l14-11v11z" fill="#45c0f5" />
        <path d="M0 6h12v12H0z" fill="#0f64b8" />
        <circle cx="6" cy="12" r="3" fill="none" stroke="#fff" strokeWidth="1.800" />
      </svg>
    ),
  },
  {
    name: 'Chrome',
    open: true,
    icon: (
      <svg width="24" height="24" viewBox="0 0 24 24">
        <circle cx="12" cy="12" r="11" fill="#fcc934" />
        <path d="M2.500 6.500A11 11 0 0 1 21.500 6.500H12A5.500 5.500 0 0 0 7.200 14.700z" fill="#df4a3c" />
        <path d="M2.500 6.500L7.200 14.700A5.500 5.500 0 0 0 13 17.400L11 23A11 11 0 0 1 2.500 6.500z" fill="#2f9e4f" />
        <circle cx="12" cy="12" r="5.300" fill="#fff" />
        <circle cx="12" cy="12" r="4.200" fill="#4a88ee" />
      </svg>
    ),
  },
  { name: 'PowerPoint', active: true, icon: <PowerPointLogo size={24} /> },
];

const tray = [
  { name: 'Show hidden icons', icon: <path d="M2.500 11L8 5.500L13.500 11" strokeWidth="1.500" /> },
  { name: 'Meet now', icon: <><rect x="3" y="4.500" width="7.500" height="7" rx="1.500" strokeWidth="1.400" /><path d="M10.500 7L13 5.500V10.500L10.500 9M4 1.500Q7.500 0 11 1.500M4 14.500Q7.500 16 11 14.500" strokeWidth="1.200" /></> },
  { name: 'OneDrive', icon: <><path d="M1 10C0 7 3 6 4 6.500C5 2.500 10 2 11.500 5.500C14 5 15.500 7 15 9C14.500 12 13 12.500 11 12.500H4Q1.500 12.500 1 10z" fill="#8b8b8b" stroke="#222" /><path d="M2 11Q4 8 9 9L14 10Q13 12 11 12H4Q2.500 12 2 11z" fill="#f1f1f1" stroke="none" /></> },
  { name: 'Battery', icon: <><rect x="1" y="4.500" width="13" height="8" strokeWidth="1.300" /><path d="M3 6.500H7V10.500H3z" fill="currentColor" /><path d="M15.500 7V10" /></> },
  { name: 'Network', icon: <><path d="M2 13A11 11 0 0 1 13 3M5 14A8.500 8.500 0 0 1 13.500 6M8 14.500A6 6 0 0 1 14 9" strokeWidth="1.200" /><circle cx="12.500" cy="13" r="1.500" fill="currentColor" stroke="none" /></> },
  { name: 'Volume', icon: <><path d="M.5 6H3L6.500 3V13L3 10H.5zM8.500 6Q10 8 8.500 10.500" strokeWidth="1.200" /><path d="M11 4Q13.500 8 11 12M13.500 2.500Q17 8 13.500 13.500" stroke="#888" /></> },
];

const Taskbar = () => (
  <div className="flex h-10 shrink-0 items-center bg-[#cbdfe5] text-black">
    <button aria-label="Start" className="flex w-12 justify-center">
      <Svg><path d="M0 2.500L7 1.500V7.500H0zM8 1.300L16 0V7.500H8zM0 8.500H7V14.500L0 13.500zM8 8.500H16V16L8 14.700z" fill="currentColor" stroke="none" /></Svg>
    </button>
    <div className="flex h-10 w-[344px] items-center border border-[#c8c8c8] bg-white pl-[11px]">
      <Svg w={17} h={17}>
        <circle cx="10.500" cy="6" r="5.200" strokeWidth="1.200" />
        <path d="M7 10L.5 16.500" strokeWidth="1.200" />
      </Svg>
      <input aria-label="Type here to search" placeholder="Type here to search" className="ml-[11px] flex-1 text-sm outline-none placeholder:text-[#222]" />
    </div>
    <button aria-label="Cortana" className="flex w-12 justify-center">
      <Svg><circle cx="8" cy="8" r="6.500" strokeWidth="2.200" /></Svg>
    </button>
    <button aria-label="Task view" className="mr-[3px] flex w-12 justify-center">
      <Svg>
        <path d="M.5 1V2.500H11.500V1M.5 15V13.500H11.500V15M.5 5.500H11.500V10.500H.5zM14.500 0V3M14.500 8V15" strokeWidth="1.200" />
        <path d="M13 4.500H16V7H13z" fill="currentColor" stroke="none" />
      </Svg>
    </button>
    <div className="flex gap-px">
      {apps.map((app) => (
        <button key={app.name} aria-label={app.name} className={`flex h-10 w-12 flex-col items-center ${app.active ? 'bg-[#ecf3f5]' : ''}`}>
          <span className="flex h-[38px] items-center pt-0.5">{app.icon}</span>
          {app.open && <span className="h-0.5 w-10 bg-[#0078d7]" />}
          {app.active && <span className="h-0.5 w-12 bg-[#0078d7]" />}
        </button>
      ))}
    </div>
    <div className="flex-1" />
    <button className="flex items-center gap-2 text-[13px]">
      <svg width="24" height="22" viewBox="0 0 24 22" aria-hidden="true">
        <path d="M10 2A7 7 0 1 0 13 14Q15 7 10 2z" fill="#fbb81c" />
        <path d="M5 20a4.500 4.500 0 0 1 0-8.500Q7 12 8 11Q12 6 16 11Q22 10 23 16Q22 20 19 20z" fill="#d9ebfa" />
        <path d="M5 20Q12 17 22 18Q21 20 19 20z" fill="#a7cdee" />
      </svg>
      -7°C
    </button>
    <div className="ml-3 flex">
      {tray.map((item) => (
        <button key={item.name} aria-label={item.name} className="flex w-6 justify-center"><Svg>{item.icon}</Svg></button>
      ))}
    </div>
    <button className="ml-[7px] w-[27px] text-left text-xs">ENG</button>
    <button className="w-[76px] text-center text-[11px] leading-[18px]">6:30 AM<br />2021-12-08</button>
    <button aria-label="Notifications" className="relative ml-2 mr-2.5 h-6 w-[26px]">
      <Svg w={16} h={17}>
        <path d="M0 0H16V12H6L3 15V12H0z" fill="#000" stroke="none" />
        <path d="M3 3.500H13M3 6.500H13M3 9.500H9" stroke="#fff" />
      </Svg>
      <span className="absolute right-0.5 -bottom-1 flex size-[17px] items-center justify-center rounded-full border border-[#777] bg-[#d5dde0] text-[10px] leading-none font-semibold">2</span>
    </button>
    <div className="mr-1 h-10 w-px bg-[#9fb1b8]" />
  </div>
);

const App = () => {
  return (
    <div className="flex h-screen min-h-[600px] flex-col overflow-hidden bg-[#efefef] font-['Noto_Sans','Open_Sans',sans-serif] text-xs text-[#222]">
      <TitleBar />
      <TabRow />
      <Ribbon />
      <div className="flex min-h-0 flex-1">
        <SlidePanel />
        <SlideEditor />
      </div>
      <StatusBar />
      <Taskbar />
    </div>
  );
};

export default App;
